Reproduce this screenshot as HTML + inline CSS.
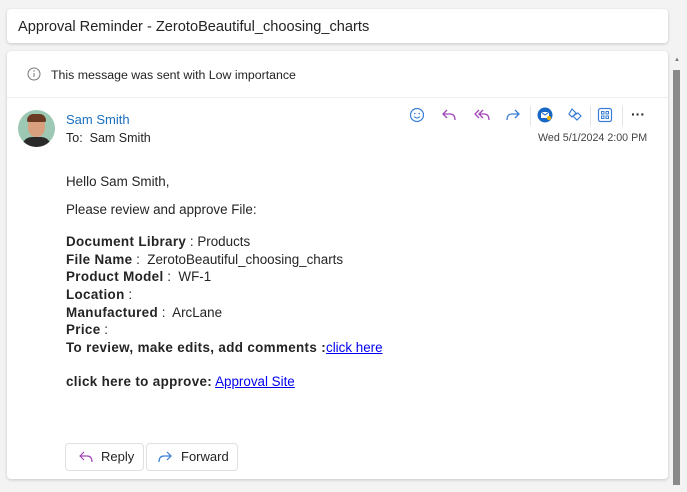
<!DOCTYPE html>
<html><head><style>
body{margin:0;width:687px;height:492px;background:#f3f3f3;font-family:"Liberation Sans",sans-serif;position:relative;overflow:hidden;color:#242424}
.card{position:absolute;background:#fff;border-radius:4px;box-shadow:0 1px 3px rgba(0,0,0,.18)}
.abs{position:absolute}
.ic{position:absolute;top:107px}
.b{font-weight:bold;letter-spacing:0.35px}
a{color:#0000ee;text-decoration:underline}
.btn{position:absolute;top:443px;height:26px;border:1px solid #e0e0e0;border-radius:4px;background:#fff;font-size:13px;line-height:26px}
</style></head><body>
<div class="card" style="left:7px;top:9px;width:661px;height:34px"></div>
<div class="abs" style="left:18px;top:19px;font-size:14.6px">Approval Reminder - ZerotoBeautiful_choosing_charts</div>
<div class="card" style="left:7px;top:51px;width:661px;height:428px"></div>
<div class="abs" style="left:673px;top:70px;width:7px;height:415px;background:#8a8a8a"></div>
<div class="abs" style="left:674px;top:57px;font-size:6px;color:#777">▲</div>
<svg class="abs" style="left:27px;top:67px" width="14" height="14"><circle cx="7" cy="7" r="6" fill="none" stroke="#777" stroke-width="1"/><line x1="7" y1="6" x2="7" y2="10" stroke="#777"/><circle cx="7" cy="4" r=".7" fill="#777"/></svg>
<div class="abs" style="left:51px;top:68px;font-size:12.35px">This message was sent with Low importance</div>
<div class="abs" style="left:7px;top:97px;width:661px;height:1px;background:#eee"></div>
<div class="abs" style="left:18px;top:110px;width:37px;height:37px;border-radius:50%;background:#9cc8b4;overflow:hidden">
<div class="abs" style="left:10px;top:6px;width:17px;height:21px;border-radius:45%;background:#d9a080"></div>
<div class="abs" style="left:9px;top:4px;width:19px;height:8px;border-radius:8px 8px 2px 2px;background:#6b3a22"></div>
<div class="abs" style="left:4px;top:27px;width:29px;height:14px;border-radius:10px 10px 0 0;background:#2a2a2a"></div>
</div>
<div class="abs" style="left:66px;top:112px;font-size:13px;color:#1a6fbf">Sam Smith</div>
<div class="abs" style="left:66px;top:131px;font-size:12.5px">To:&nbsp; Sam Smith</div>
<svg class="ic" style="left:409px" width="16" height="16"><circle cx="8" cy="8" r="6.5" fill="none" stroke="#3a7fd5" stroke-width="1.2"/><circle cx="5.8" cy="6.5" r=".8" fill="#3a7fd5"/><circle cx="10.2" cy="6.5" r=".8" fill="#3a7fd5"/><path d="M5 9.5q3 3 6 0" fill="none" stroke="#3a7fd5" stroke-width="1.1"/></svg>
<svg class="ic" style="left:441px" width="16" height="16"><path d="M6 3L2 7l4 4M2 7h7q5 0 5 6" fill="none" stroke="#a248b8" stroke-width="1.3"/></svg>
<svg class="ic" style="left:473px" width="18" height="16"><path d="M6 3L2 7l4 4M10 3L6 7l4 4M6 7h5q5 0 5 6" fill="none" stroke="#a248b8" stroke-width="1.3"/></svg>
<svg class="ic" style="left:505px" width="16" height="16"><path d="M10 3l4 4-4 4M14 7H7q-5 0-5 6" fill="none" stroke="#3a7fd5" stroke-width="1.3"/></svg>
<div class="abs" style="left:530px;top:106px;width:1px;height:20px;background:#e5e5e5"></div>
<svg class="ic" style="left:537px" width="16" height="16"><circle cx="8" cy="8" r="7.5" fill="#1768c4"/><rect x="4" y="5" width="8" height="6" fill="#fff"/><path d="M4 5l4 3 4-3" fill="none" stroke="#1768c4"/><circle cx="12" cy="11" r="2" fill="#f0b400"/></svg>
<svg class="ic" style="left:567px" width="16" height="16"><path d="M5 2l4 4-4 4-3-3zM11 6l3 3-4 4-4-4z" fill="none" stroke="#3a7fd5" stroke-width="1.2"/></svg>
<div class="abs" style="left:590px;top:106px;width:1px;height:20px;background:#e5e5e5"></div>
<svg class="ic" style="left:597px" width="16" height="16"><rect x="1.5" y="1.5" width="13" height="13" rx="2" fill="none" stroke="#3a7fd5" stroke-width="1.2"/><rect x="4.5" y="4.5" width="2.5" height="2.5" fill="none" stroke="#3a7fd5"/><rect x="9" y="4.5" width="2.5" height="2.5" fill="none" stroke="#3a7fd5"/><rect x="4.5" y="9" width="2.5" height="2.5" fill="none" stroke="#3a7fd5"/><rect x="9" y="9" width="2.5" height="2.5" fill="none" stroke="#3a7fd5"/></svg>
<div class="abs" style="left:622px;top:106px;width:1px;height:20px;background:#e5e5e5"></div>
<div class="abs" style="left:631px;top:106px;font-size:14px;font-weight:bold">···</div>
<div class="abs" style="left:538px;top:132px;font-size:10.7px;color:#444">Wed 5/1/2024 2:00 PM</div>
<div class="abs" style="left:66px;top:173px;font-size:13.4px;line-height:17.6px">
Hello Sam Smith,<br><div style="height:10px"></div>Please review and approve File:<br><div style="height:15px"></div>
<span class="b">Document Library</span> : Products<br>
<span class="b">File Name</span> :&nbsp; ZerotoBeautiful_choosing_charts<br>
<span class="b">Product Model</span> :&nbsp; WF-1<br>
<span class="b">Location</span> :<br>
<span class="b">Manufactured</span> :&nbsp; ArcLane<br>
<span class="b">Price</span> :<br>
<span class="b">To review, make edits, add comments :</span><a>click here</a><br><div style="height:17px"></div>
<span class="b">click here to approve:</span> <a>Approval Site</a>
</div>
<div class="btn" style="left:65px;width:77px"><svg class="abs" style="left:12px;top:6px" width="16" height="14"><path d="M6 2L2 6l4 4M2 6h7q5 0 5 6" fill="none" stroke="#a248b8" stroke-width="1.2"/></svg><span class="abs" style="left:35px">Reply</span></div>
<div class="btn" style="left:146px;width:90px"><svg class="abs" style="left:10px;top:6px" width="16" height="14"><path d="M10 2l4 4-4 4M14 6H7q-5 0-5 6" fill="none" stroke="#3a7fd5" stroke-width="1.2"/></svg><span class="abs" style="left:34px">Forward</span></div>
</body></html>
